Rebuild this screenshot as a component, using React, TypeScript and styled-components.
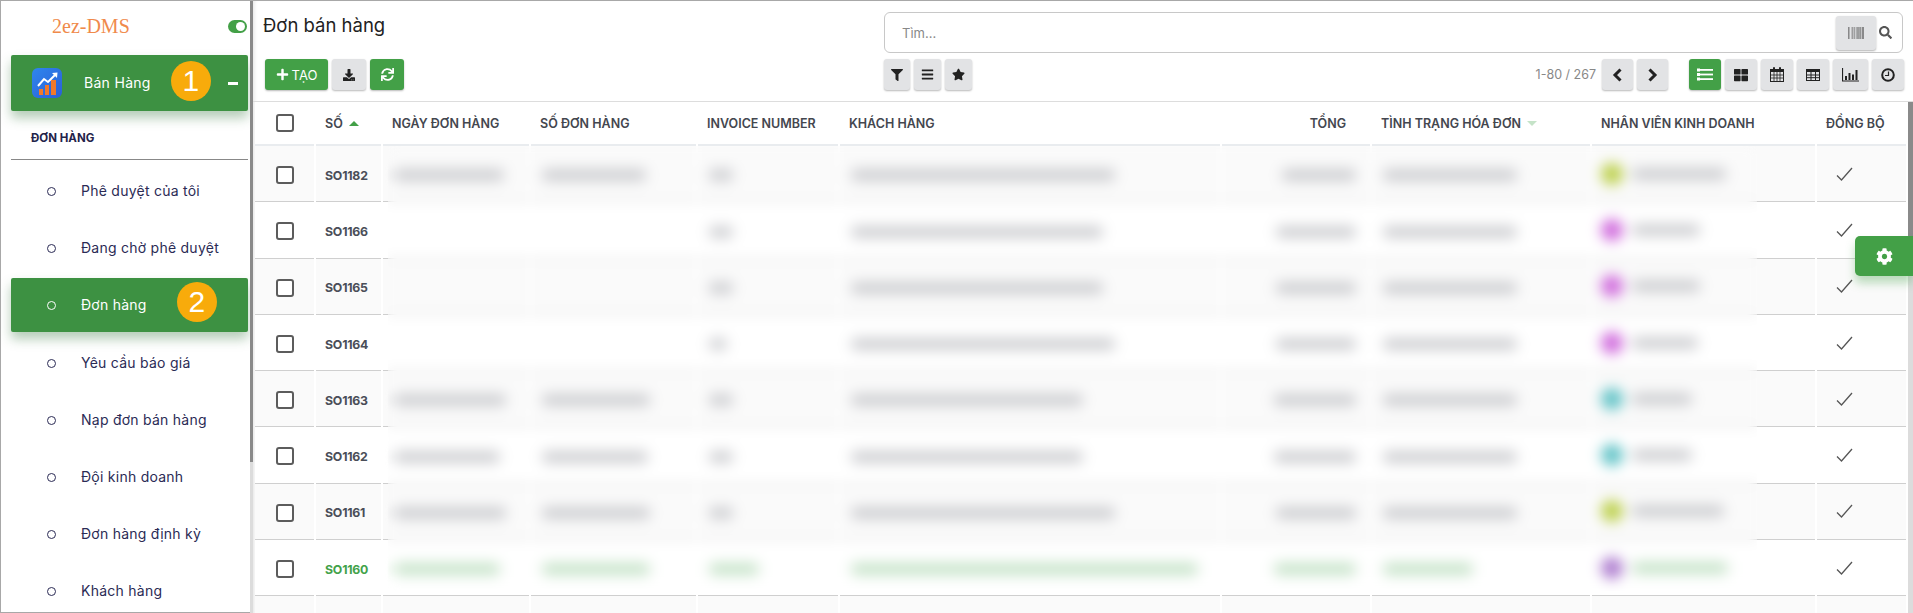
import styled, { createGlobalStyle } from 'styled-components';
import {
  FaBarcode, FaBars, FaCog, FaDownload, FaFilter,
  FaPlus, FaSearch, FaStar, FaSync, FaThLarge,
} from 'react-icons/fa';

// --- Data ---
const menuItems = [
  { name: 'Phê duyệt của tôi' },
  { name: 'Đang chờ phê duyệt' },
  { name: 'Đơn hàng', active: true },
  { name: 'Yêu cầu báo giá' },
  { name: 'Nạp đơn bán hàng' },
  { name: 'Đội kinh doanh' },
  { name: 'Đơn hàng định kỳ' },
  { name: 'Khách hàng' },
];

const columns = [
  { label: '', width: 59 },
  { label: 'SỐ', width: 65 },
  { label: 'NGÀY ĐƠN HÀNG', width: 146 },
  { label: 'SỐ ĐƠN HÀNG', width: 165 },
  { label: 'INVOICE NUMBER', width: 140 },
  { label: 'KHÁCH HÀNG', width: 380 },
  { label: 'TỔNG', width: 148, right: true },
  { label: 'TÌNH TRẠNG HÓA ĐƠN', width: 218 },
  { label: 'NHÂN VIÊN KINH DOANH', width: 223 },
  { label: 'ĐỒNG BỘ', width: 89 },
];

type Order = {
  id: string;
  date: number;
  ref: number;
  invoice: number;
  customer: number;
  total: number;
  status: number;
  avatar: string;
  seller: number;
  green?: boolean;
};

// widths of the blurred values, in px
const orders: Order[] = [
  { id: 'SO1182', date: 108, ref: 102, invoice: 22, customer: 262, total: 72, status: 132, avatar: '#bcd04a', seller: 92 },
  { id: 'SO1166', date: 0, ref: 0, invoice: 22, customer: 250, total: 78, status: 132, avatar: '#cf68dc', seller: 66 },
  { id: 'SO1165', date: 0, ref: 0, invoice: 22, customer: 250, total: 78, status: 132, avatar: '#cf68dc', seller: 66 },
  { id: 'SO1164', date: 0, ref: 0, invoice: 16, customer: 262, total: 78, status: 132, avatar: '#cf68dc', seller: 64 },
  { id: 'SO1163', date: 110, ref: 106, invoice: 22, customer: 230, total: 80, status: 132, avatar: '#5fc2c6', seller: 58 },
  { id: 'SO1162', date: 104, ref: 104, invoice: 22, customer: 230, total: 80, status: 132, avatar: '#5fc2c6', seller: 58 },
  { id: 'SO1161', date: 110, ref: 106, invoice: 22, customer: 262, total: 78, status: 132, avatar: '#bcd04a', seller: 90 },
  { id: 'SO1160', date: 104, ref: 106, invoice: 48, customer: 345, total: 80, status: 88, avatar: '#ac7ace', seller: 94, green: true },
];

// --- Styled Components ---
const GlobalStyle = createGlobalStyle`
  html, body {
    margin: 0;
    height: 100%;
    overflow: hidden;
    background: #fff;
  }
  * { box-sizing: border-box; }
`;

const Page = styled.div`
  display: flex;
  width: 1913px;
  height: 613px;
  overflow: hidden;
  border-top: 1px solid #a8a8a8;
  border-left: 1px solid #a8a8a8;
  font-family: Inter, 'Noto Sans', sans-serif;
  color: #222;
`;

const Sidebar = styled.aside`
  width: 249px;
  flex: none;
  overflow: hidden;
  border-bottom: 1px solid #a8a8a8;
`;

const ScrollTrack = styled.div<{ $width: number }>`
  width: ${(p) => p.$width}px;
  flex: none;
  background: #dcdcdc;
`;

const ScrollThumb = styled.div<{ $height: number }>`
  height: ${(p) => p.$height}px;
  background: #8a8a8a;
`;

const BrandRow = styled.div`
  height: 54px;
  display: flex;
  align-items: center;
  justify-content: space-between;
  padding: 0 3px 4px 51px;
`;

const Logo = styled.span`
  font-family: 'Liberation Serif', serif;
  font-size: 20px;
  color: #f08a4b;
`;

const Toggle = styled.span`
  width: 19px;
  height: 13px;
  border-radius: 7px;
  background: #43a047;
  display: flex;
  justify-content: flex-end;
  padding: 2px;

  &::after {
    content: '';
    width: 9px;
    height: 9px;
    border-radius: 50%;
    background: #fff;
  }
`;

const ParentItem = styled.div`
  position: relative;
  height: 56px;
  margin: 0 2px 0 10px;
  padding: 0 10px 0 21px;
  display: flex;
  align-items: center;
  gap: 22px;
  background: #3d9142;
  border-radius: 2px;
  box-shadow: 0 7px 12px rgba(40, 110, 50, 0.35);
  color: #fff;
  font-size: 14px;
  letter-spacing: 0.3px;
`;

const ParentLabel = styled.span`
  margin-bottom: 2px;
`;

const Minus = styled.span`
  width: 10px;
  height: 3px;
  margin-left: auto;
  background: #fff;
`;

const Badge = styled.span<{ $left: number; $top: number }>`
  position: absolute;
  left: ${(p) => p.$left}px;
  top: ${(p) => p.$top}px;
  width: 40px;
  height: 40px;
  border-radius: 50%;
  background: #f8ab0b;
  color: #fff;
  font-family: 'Liberation Sans', sans-serif;
  font-size: 30px;
  display: flex;
  align-items: center;
  justify-content: center;
`;

const SectionLabel = styled.div`
  height: 49px;
  margin: 0 2px 0 10px;
  padding: 5px 0 0 20px;
  display: flex;
  align-items: center;
  border-bottom: 1px solid #888;
  font-size: 11.5px;
  font-weight: 700;
  color: #23234a;
`;

const NavList = styled.nav`
  display: flex;
  flex-direction: column;
  padding-top: 2px;
`;

const NavItem = styled.div<{ $active?: boolean }>`
  position: relative;
  height: 54px;
  flex: none;
  margin: 1.6px 2px 1.6px 10px;
  padding-left: 36px;
  display: flex;
  align-items: center;
  gap: 25px;
  border-radius: 2px;
  font-size: 14px;
  letter-spacing: 0.25px;
  color: ${(p) => (p.$active ? '#fff' : '#2b2b55')};
  background: ${(p) => (p.$active ? '#3d9142' : 'transparent')};
  box-shadow: ${(p) => (p.$active ? '0 7px 12px rgba(40, 110, 50, 0.35)' : 'none')};
`;

const Bullet = styled.span`
  width: 9px;
  height: 9px;
  margin-top: 2px;
  border-radius: 50%;
  border: 1px solid currentColor;
`;

const Main = styled.main`
  flex: 1;
  min-width: 0;
  display: flex;
  flex-direction: column;
  box-shadow: inset 4px 0 4px -3px rgba(0, 0, 0, 0.12);
`;

const ControlPanel = styled.header`
  height: 101px;
  flex: none;
  display: grid;
  grid-template-columns: 621px 1fr;
  grid-template-rows: 53px 33px;
  padding-left: 10px;
  padding-right: 9px;
  border-bottom: 1px solid #ddd;
`;

const Title = styled.h1`
  margin: 0;
  font-size: 18.5px;
  font-weight: 400;
  line-height: 48px;
  color: #222;
`;

const SearchBox = styled.div`
  height: 41px;
  margin-top: 11px;
  margin-right: 1px;
  padding: 0 10px 0 17px;
  display: flex;
  align-items: center;
  border: 1px solid #c8c8c8;
  border-radius: 6px;
  font-size: 13px;
  color: #888;
  background: #fff;
`;

const SearchHint = styled.span`
  flex: 1;
`;

const BarcodeButton = styled.span`
  width: 40px;
  height: 34px;
  margin-right: 3px;
  display: flex;
  align-items: center;
  justify-content: center;
  background: #e2e3e5;
  border-radius: 3px;
  box-shadow: 0 1px 2px rgba(0, 0, 0, 0.3);
  color: #666;
  font-size: 16px;
`;

const SearchIcon = styled(FaSearch)`
  color: #555;
  font-size: 13px;
`;

const ButtonRow = styled.div`
  display: flex;
  align-items: flex-start;
  padding-top: 5px;
  gap: 4px;
  padding-left: 2px;
`;

const RightRow = styled(ButtonRow)`
  padding-left: 0;
`;

const Btn = styled.button<{ $width: number; $green?: boolean }>`
  width: ${(p) => p.$width}px;
  height: 31px;
  padding: 0;
  border: 0;
  border-radius: 3px;
  display: flex;
  align-items: center;
  justify-content: center;
  gap: 3px;
  font-family: inherit;
  font-size: 13px;
  color: ${(p) => (p.$green ? '#fff' : '#222')};
  background: ${(p) => (p.$green ? '#43a047' : '#e2e3e5')};
  box-shadow: 0 1px 2px rgba(0, 0, 0, 0.28);
`;

const Pager = styled.span`
  margin-left: auto;
  margin-right: 2px;
  line-height: 31px;
  font-size: 12.5px;
  color: #888;
`;

const ViewGroup = styled.div`
  display: flex;
  gap: 4px;
  margin-left: 17px;
`;

const TableArea = styled.div`
  position: relative;
  flex: 1;
  min-height: 0;
  display: flex;
  overflow: hidden;
`;

const TableWrap = styled.div`
  width: 1655px;
  flex: none;
`;

const OrdersTable = styled.table`
  width: 1655px;
  table-layout: fixed;
  border-collapse: separate;
  border-spacing: 2px 0;
`;

const HeadCell = styled.th<{ $width: number; $right?: boolean; $center?: boolean }>`
  width: ${(p) => p.$width}px;
  height: 44px;
  padding: 0 ${(p) => (p.$right ? '24px' : '9px')} 0 9px;
  text-align: ${(p) => (p.$right ? 'right' : p.$center ? 'center' : 'left')};
  font-size: 12.5px;
  font-weight: 600;
  color: #44474f;
  white-space: nowrap;
  border-bottom: 2px solid #e9ecef;
  background: #fff;
`;

const SortCaret = styled.span<{ $down?: boolean }>`
  display: inline-block;
  margin-left: 6px;
  vertical-align: 2px;
  border-left: 5px solid transparent;
  border-right: 5px solid transparent;
  ${(p) => (p.$down ? 'border-top: 5px solid #c5e3c8;' : 'border-bottom: 5px solid #43a047;')}
`;

const Row = styled.tr`
  height: 56.3px;
`;

const Cell = styled.td<{ $odd: boolean; $right?: boolean; $center?: boolean }>`
  padding: 0 ${(p) => (p.$right ? '12px' : '9px')} 0 9px;
  text-align: ${(p) => (p.$right ? 'right' : p.$center ? 'center' : 'left')};
  border-bottom: 1px solid #cfcfcf;
  background: ${(p) => (p.$odd ? '#fafafa' : '#fff')};
`;

const Checkbox = styled.span`
  display: inline-block;
  width: 18px;
  height: 18px;
  vertical-align: middle;
  border: 2px solid #5c5c5c;
  border-radius: 3px;
  background: #fff;
`;

const OrderId = styled.span<{ $green?: boolean }>`
  font-size: 12.3px;
  font-weight: 700;
  letter-spacing: -0.2px;
  color: ${(p) => (p.$green ? '#43a24a' : '#4a4e58')};
`;

const ValueBar = styled.span<{ $width: number; $green?: boolean }>`
  display: inline-block;
  width: ${(p) => p.$width}px;
  height: 10px;
  margin: 0 3px;
  vertical-align: middle;
  filter: blur(4px);
  background: ${(p) => (p.$green ? '#b8dcbb' : '#c2c3c7')};
`;

const Seller = styled.span`
  display: flex;
  align-items: center;
  gap: 7px;
`;

const Avatar = styled.span<{ $color: string }>`
  width: 22px;
  height: 22px;
  flex: none;
  border-radius: 50%;
  filter: blur(3.5px);
  background: ${(p) => p.$color};
`;

const CheckMark = styled.svg`
  display: block;
  margin-left: 10px;
`;

// the customer data is hidden in the picture, the overlay blurs everything below it
const BlurOverlay = styled.div`
  position: absolute;
  left: 135px;
  top: 44px;
  width: 1369px;
  height: 445px;
  backdrop-filter: blur(6px);
`;

const SettingsButton = styled.button`
  position: absolute;
  right: 0;
  top: 134px;
  width: 58px;
  height: 40px;
  padding: 0;
  border: 0;
  border-radius: 5px 0 0 5px;
  display: flex;
  align-items: center;
  justify-content: center;
  color: #fff;
  font-size: 17px;
  background: #43a047;
  box-shadow: 0 7px 10px rgba(67, 160, 71, 0.35);
`;

function SalesIcon() {
  return (
    <svg width="30" height="30" viewBox="0 0 30 30" aria-hidden="true">
      <defs>
        <linearGradient id="salesBg" x1="0" y1="0" x2="1" y2="1">
          <stop offset="0" stopColor="#2f86ee" />
          <stop offset="1" stopColor="#2b5fd6" />
        </linearGradient>
      </defs>
      <rect width="30" height="30" rx="6" fill="url(#salesBg)" />
      <rect x="7" y="21" width="4" height="6" fill="#f0792b" />
      <rect x="13" y="17" width="4" height="10" fill="#f0792b" />
      <rect x="19" y="12" width="5" height="15" fill="#f0792b" />
      <path d="M6 18 L12 11 L16 14 L24 6" fill="none" stroke="#fff" strokeWidth="2" />
      <path d="M20 5 L25.5 4.5 L25 10 Z" fill="#fff" />
    </svg>
  );
}

function ChevronIcon({ left }: { left?: boolean }) {
  return (
    <svg width="11" height="14" viewBox="0 0 11 14" aria-hidden="true">
      <path d={left ? 'M8.5 1.5 L3 7 L8.5 12.5' : 'M2.5 1.5 L8 7 L2.5 12.5'} fill="none" stroke="#222" strokeWidth="3" />
    </svg>
  );
}

function ListIcon() {
  return (
    <svg width="16" height="13" viewBox="0 0 16 13" aria-hidden="true" fill="#fff">
      <rect x="0" y="0.5" width="3" height="3" />
      <rect x="0" y="5" width="3" height="3" />
      <rect x="0" y="9.5" width="3" height="3" />
      <rect x="3" y="1" width="13" height="1.8" />
      <rect x="3" y="5.6" width="13" height="1.8" />
      <rect x="3" y="10.2" width="13" height="1.8" />
    </svg>
  );
}

function CalendarIcon() {
  return (
    <svg width="14" height="15" viewBox="0 0 14 15" aria-hidden="true">
      <rect x="0.5" y="2.5" width="13" height="12" fill="none" stroke="#222" />
      <rect x="0.5" y="2" width="13" height="3" fill="#222" />
      <rect x="3" y="0" width="2" height="4" rx="1" fill="#222" />
      <rect x="9" y="0" width="2" height="4" rx="1" fill="#222" />
      <path d="M4 5 V14 M7 5 V14 M10 5 V14 M1 8 H13 M1 11 H13" stroke="#222" strokeWidth="0.8" />
    </svg>
  );
}

function TableIcon() {
  return (
    <svg width="14" height="12" viewBox="0 0 14 12" aria-hidden="true">
      <rect x="0.5" y="0.5" width="13" height="11" fill="none" stroke="#222" />
      <rect x="0.5" y="0.5" width="13" height="2.5" fill="#222" />
      <path d="M5 3 V11 M9.5 3 V11 M1 6 H13 M1 8.7 H13" stroke="#222" />
    </svg>
  );
}

function BarsChartIcon() {
  return (
    <svg width="17" height="14" viewBox="0 0 17 14" aria-hidden="true">
      <path d="M0.5 0 V13 H17" fill="none" stroke="#222" strokeWidth="1.2" />
      <rect x="3" y="8" width="2" height="4" fill="#222" />
      <rect x="6.5" y="5" width="2" height="7" fill="#222" />
      <rect x="10" y="6.5" width="2" height="5.5" fill="#222" />
      <rect x="13.5" y="2" width="2" height="10" fill="#222" />
    </svg>
  );
}

function ClockIcon() {
  return (
    <svg width="14" height="14" viewBox="0 0 14 14" aria-hidden="true">
      <circle cx="7" cy="7" r="5.8" fill="none" stroke="#222" strokeWidth="2" />
      <path d="M7.5 3.5 V7.5 H4" fill="none" stroke="#222" strokeWidth="1.2" />
    </svg>
  );
}

function ThinCheck() {
  return (
    <CheckMark width="17" height="14" viewBox="0 0 17 14" aria-hidden="true">
      <path d="M1 8.5 L5.5 13 L16 1" fill="none" stroke="#555" strokeWidth="1.3" />
    </CheckMark>
  );
}

export default function App() {
  return (
    <>
      <GlobalStyle />
      <Page>
        <Sidebar>
          <BrandRow>
            <Logo>2ez-DMS</Logo>
            <Toggle />
          </BrandRow>
          <ParentItem>
            <SalesIcon />
            <ParentLabel>Bán Hàng</ParentLabel>
            <Minus />
            <Badge $left={160} $top={6}>1</Badge>
          </ParentItem>
          <SectionLabel>ĐƠN HÀNG</SectionLabel>
          <NavList>
            {menuItems.map((item) => (
              <NavItem key={item.name} $active={item.active}>
                <Bullet />
                <span>{item.name}</span>
                {item.active && <Badge $left={166} $top={4}>2</Badge>}
              </NavItem>
            ))}
          </NavList>
        </Sidebar>
        <ScrollTrack $width={3}>
          <ScrollThumb $height={461} />
        </ScrollTrack>
        <Main>
          <ControlPanel>
            <Title>Đơn bán hàng</Title>
            <SearchBox>
              <SearchHint>Tìm...</SearchHint>
              <BarcodeButton><FaBarcode /></BarcodeButton>
              <SearchIcon />
            </SearchBox>
            <ButtonRow>
              <Btn $width={63} $green><FaPlus size={13} />TẠO</Btn>
              <Btn $width={34}><FaDownload size={12} /></Btn>
              <Btn $width={34} $green><FaSync size={13} /></Btn>
            </ButtonRow>
            <RightRow>
              <Btn $width={26}><FaFilter size={12} /></Btn>
              <Btn $width={27}><FaBars size={13} /></Btn>
              <Btn $width={27}><FaStar size={13} /></Btn>
              <Pager>1-80 / 267</Pager>
              <Btn $width={31}><ChevronIcon left /></Btn>
              <Btn $width={31}><ChevronIcon /></Btn>
              <ViewGroup>
                <Btn $width={32} $green><ListIcon /></Btn>
                <Btn $width={32}><FaThLarge size={14} /></Btn>
                <Btn $width={32}><CalendarIcon /></Btn>
                <Btn $width={32}><TableIcon /></Btn>
                <Btn $width={35}><BarsChartIcon /></Btn>
                <Btn $width={32}><ClockIcon /></Btn>
              </ViewGroup>
            </RightRow>
          </ControlPanel>
          <TableArea>
            <TableWrap>
              <OrdersTable>
                <thead>
                  <tr>
                    {columns.map((col, i) => (
                      <HeadCell key={col.label || 'select'} $width={col.width} $right={col.right} $center={i === 0}>
                        {i === 0 ? <Checkbox /> : col.label}
                        {i === 1 && <SortCaret />}
                        {i === 7 && <SortCaret $down />}
                      </HeadCell>
                    ))}
                  </tr>
                </thead>
                <tbody>
                  {orders.map((order, i) => {
                    const odd = i % 2 === 0;
                    return (
                      <Row key={order.id}>
                        <Cell $odd={odd} $center><Checkbox /></Cell>
                        <Cell $odd={odd}><OrderId $green={order.green}>{order.id}</OrderId></Cell>
                        <Cell $odd={odd}>{order.date > 0 && <ValueBar $width={order.date} $green={order.green} />}</Cell>
                        <Cell $odd={odd}>{order.ref > 0 && <ValueBar $width={order.ref} $green={order.green} />}</Cell>
                        <Cell $odd={odd}><ValueBar $width={order.invoice} $green={order.green} /></Cell>
                        <Cell $odd={odd}><ValueBar $width={order.customer} $green={order.green} /></Cell>
                        <Cell $odd={odd} $right><ValueBar $width={order.total} $green={order.green} /></Cell>
                        <Cell $odd={odd}><ValueBar $width={order.status} $green={order.green} /></Cell>
                        <Cell $odd={odd}>
                          <Seller>
                            <Avatar $color={order.avatar} />
                            <ValueBar $width={order.seller} $green={order.green} />
                          </Seller>
                        </Cell>
                        <Cell $odd={odd}><ThinCheck /></Cell>
                      </Row>
                    );
                  })}
                  <Row>
                    {columns.map((col) => (
                      <Cell key={col.label || 'select'} $odd />
                    ))}
                  </Row>
                </tbody>
              </OrdersTable>
            </TableWrap>
            <ScrollTrack $width={5}>
              <ScrollThumb $height={145} />
            </ScrollTrack>
            <BlurOverlay />
            <SettingsButton><FaCog /></SettingsButton>
          </TableArea>
        </Main>
      </Page>
    </>
  );
}
